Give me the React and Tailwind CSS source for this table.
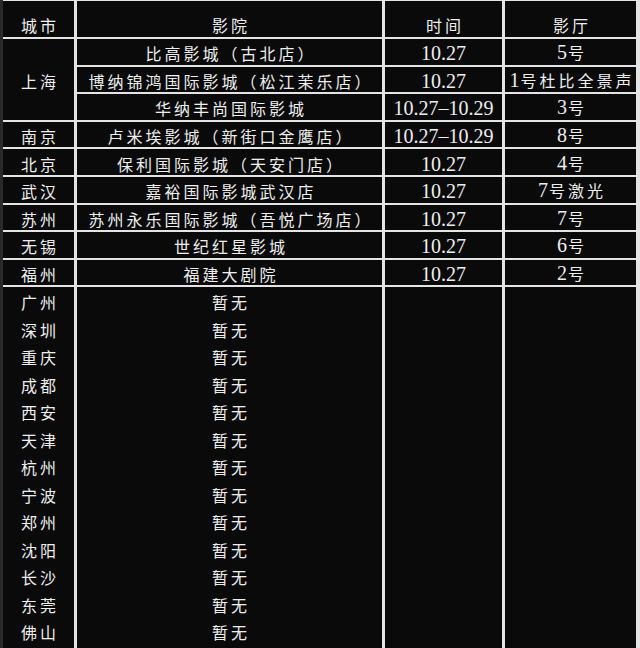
import React from "react";

const cjk = { fontFamily: '"Noto Sans CJK SC", "Noto Sans", sans-serif' };
const num = { fontFamily: '"Liberation Serif", "Noto Sans CJK SC", serif' };

const Cell = ({ children, className = "" }) => (
  <div className={`bg-[#0a0a0a] flex items-center justify-center pt-[3px] text-[#eeeeee] whitespace-nowrap ${className}`}>
    {children}
  </div>
);

const Zh = ({ children }) => (
  <span className="text-[16px] tracking-[3px] mr-[-3px] leading-none" style={cjk}>
    {children}
  </span>
);

const Num = ({ children }) => (
  <span className="text-[20px] leading-none" style={num}>
    {children}
  </span>
);

const Hall = ({ n, rest }) => (
  <span className="flex items-baseline">
    <Num>{n}</Num>
    <span className="ml-[1px]">
      <Zh>{rest}</Zh>
    </span>
  </span>
);

const rows = [
  ["比高影城（古北店）", "10.27", "5", "号"],
  ["博纳锦鸿国际影城（松江茉乐店）", "10.27", "1", "号杜比全景声"],
  ["华纳丰尚国际影城", "10.27–10.29", "3", "号"],
];

const others = [
  ["南京", "卢米埃影城（新街口金鹰店）", "10.27–10.29", "8", "号"],
  ["北京", "保利国际影城（天安门店）", "10.27", "4", "号"],
  ["武汉", "嘉裕国际影城武汉店", "10.27", "7", "号激光"],
  ["苏州", "苏州永乐国际影城（吾悦广场店）", "10.27", "7", "号"],
  ["无锡", "世纪红星影城", "10.27", "6", "号"],
  ["福州", "福建大剧院", "10.27", "2", "号"],
];

const lower = ["广州", "深圳", "重庆", "成都", "西安", "天津", "杭州", "宁波", "郑州", "沈阳", "长沙", "东莞", "佛山"];

export default function App() {
  return (
    <div className="w-[640px] h-[648px] bg-[#e4e4e4] border-l-[3px] border-l-[#2a2a2a] pt-[1px] pr-[4px] overflow-hidden">
      <div className="grid h-full grid-cols-[71px_305px_117px_131px] grid-rows-[36px_repeat(9,25.6px)_1fr] gap-x-[3px] gap-y-[2px]">
        <Cell className="items-end pb-[4px]"><Zh>城市</Zh></Cell>
        <Cell className="items-end pb-[4px]"><Zh>影院</Zh></Cell>
        <Cell className="items-end pb-[4px]"><Zh>时间</Zh></Cell>
        <Cell className="items-end pb-[4px]"><Zh>影厅</Zh></Cell>

        <Cell className="row-span-3"><Zh>上海</Zh></Cell>
        {rows.map((r) => (
          <React.Fragment key={r[0]}>
            <Cell><Zh>{r[0]}</Zh></Cell>
            <Cell><Num>{r[1]}</Num></Cell>
            <Cell><Hall n={r[2]} rest={r[3]} /></Cell>
          </React.Fragment>
        ))}
        {others.map((r) => (
          <React.Fragment key={r[0]}>
            <Cell><Zh>{r[0]}</Zh></Cell>
            <Cell><Zh>{r[1]}</Zh></Cell>
            <Cell><Num>{r[2]}</Num></Cell>
            <Cell><Hall n={r[3]} rest={r[4]} /></Cell>
          </React.Fragment>
        ))}

        <div className="bg-[#0a0a0a] flex flex-col pt-[1px] text-[#eeeeee]">
          {lower.map((c) => (
            <div key={c} className="h-[27.5px] shrink-0 flex items-center justify-center">
              <Zh>{c}</Zh>
            </div>
          ))}
        </div>
        <div className="bg-[#0a0a0a] flex flex-col pt-[1px] text-[#eeeeee]">
          {lower.map((c) => (
            <div key={c} className="h-[27.5px] shrink-0 flex items-center justify-center">
              <Zh>暂无</Zh>
            </div>
          ))}
        </div>
        <div className="bg-[#0a0a0a]" />
        <div className="bg-[#0a0a0a]" />
      </div>
    </div>
  );
}
